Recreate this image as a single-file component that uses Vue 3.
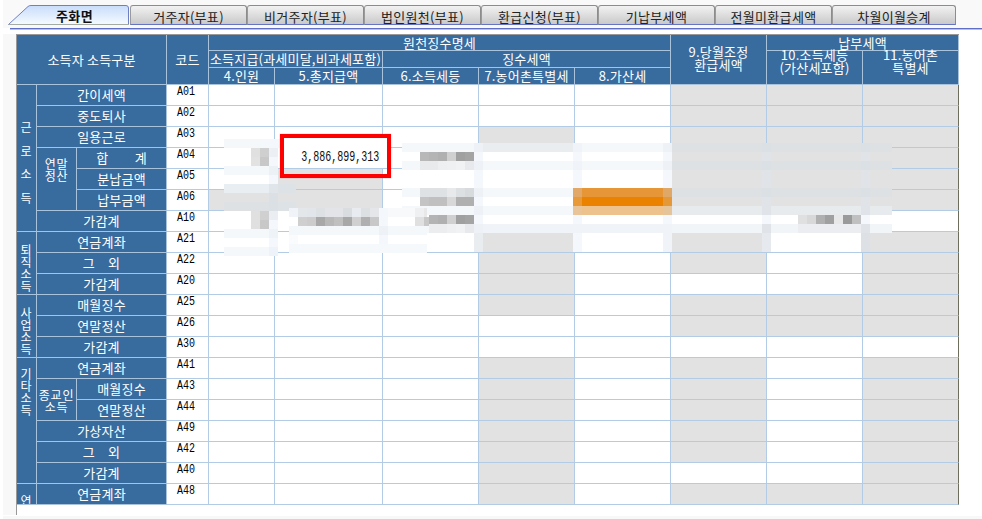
<script setup>
const tabs = ['주화면', '거주자(부표)', '비거주자(부표)', '법인원천(부표)', '환급신청(부표)', '기납부세액', '전월미환급세액', '차월이월승계']

const headers = [
  { t: ['소득자 소득구분'], c: '1 / 4', r: '1 / 4', cls: 'mid' },
  { t: ['코드'], c: '4 / 5', r: '1 / 4', cls: 'mid' },
  { t: ['원천징수명세'], c: '5 / 10', r: '1 / 2', cls: 'mid' },
  { t: ['9.당월조정', '환급세액'], c: '10 / 11', r: '1 / 4', cls: 'mid pair' },
  { t: ['납부세액'], c: '11 / 13', r: '1 / 2', cls: 'mid' },
  { t: ['소득지급(과세미달,비과세포함)'], c: '5 / 7', r: '2 / 3', cls: 'mid' },
  { t: ['징수세액'], c: '7 / 10', r: '2 / 3', cls: 'mid' },
  { t: ['10.소득세등', '(가산세포함)'], c: '11 / 12', r: '2 / 4', cls: 'top' },
  { t: ['11.농어촌', '특별세'], c: '12 / 13', r: '2 / 4', cls: 'top' },
  { t: ['4.인원'], c: '5 / 6', r: '3 / 4', cls: 'mid' },
  { t: ['5.총지급액'], c: '6 / 7', r: '3 / 4', cls: 'mid' },
  { t: ['6.소득세등'], c: '7 / 8', r: '3 / 4', cls: 'mid' },
  { t: ['7.농어촌특별세'], c: '8 / 9', r: '3 / 4', cls: 'mid' },
  { t: ['8.가산세'], c: '9 / 10', r: '3 / 4', cls: 'mid' },
]

const groups = [
  { t: '근로소득', start: 0, span: 7, pad: 30, lh: 23.5 },
  { t: '퇴직소득', start: 7, span: 3, pad: 12, lh: 12 },
  { t: '사업소득', start: 10, span: 3, pad: 12, lh: 12 },
  { t: '기타소득', start: 13, span: 6, pad: 10, lh: 12 },
  { t: '연', start: 19, span: 1, pad: 11, lh: 12 },
]

const subs = [
  { t: ['연말', '정산'], start: 3, span: 3, pad: 10 },
  { t: ['종교인', '소득'], start: 14, span: 2, pad: 10 },
]

const labels = [
  ['간이세액', 0, 2], ['중도퇴사', 1, 2], ['일용근로', 2, 2],
  ['합\u3000\u3000계', 3, 3], ['분납금액', 4, 3], ['납부금액', 5, 3],
  ['가감계', 6, 2], ['연금계좌', 7, 2], ['그\u3000외', 8, 2], ['가감계', 9, 2],
  ['매월징수', 10, 2], ['연말정산', 11, 2], ['가감계', 12, 2],
  ['연금계좌', 13, 2], ['매월징수', 14, 3], ['연말정산', 15, 3],
  ['가상자산', 16, 2], ['그\u3000외', 17, 2], ['가감계', 18, 2], ['연금계좌', 19, 2],
]

const rows = [
  ['A01', [9, 10, 11]], ['A02', [9, 10, 11]], ['A03', [7, 9, 10, 11]], ['A04', [9, 10, 11]],
  ['A05', [5, 9, 10, 11]], ['A06', [4, 5, 9, 10, 11]], ['A10', []], ['A21', [7, 9, 11]],
  ['A22', [7, 9, 11]], ['A20', [7, 11]], ['A25', [7, 9, 10, 11]], ['A26', [9, 10, 11]],
  ['A30', []], ['A41', [7, 9, 11]], ['A43', [7, 9, 11]], ['A44', [7, 9, 11]],
  ['A49', [7, 9, 11]], ['A42', [7, 9, 11]], ['A40', [7, 11]], ['A48', [7, 9, 10, 11]],
]
const dataCols = [4, 5, 6, 7, 8, 9, 10, 11]

const strip = 'f4f8fb'
const band = 'f4f7fb'
const cool = 'dde1e4'
// [x, y, w, h, colour] in page coordinates: the pixelated redaction laid over the table
const mosaic = [
  // over the 인원 column
  [224, 139, 45, 9, strip], [224, 166, 45, 9, strip], [224, 184, 45, 9, 'e9eef2'], [224, 202, 45, 9, cool],
  [224, 229, 45, 9, strip], [224, 247, 45, 9, strip],
  [269, 139, 9, 117, band], [269, 148, 9, 9, 'ecf0f4'], [269, 166, 9, 9, 'ecf1f5'], [269, 184, 9, 9, 'e0e5ea'],
  [269, 193, 9, 18, 'dbe0e4'], [269, 211, 9, 9, 'eaeef2'], [269, 229, 9, 9, 'eef3f7'], [269, 247, 9, 9, 'eef3fa'],
  [278, 139, 18, 9, strip], [278, 184, 18, 9, 'dde2e6'], [278, 202, 18, 9, 'dde2e6'],
  [251, 148, 9, 9, 'e0e0e0'], [260, 148, 9, 9, 'cfcfcf'], [251, 157, 9, 9, 'e2e2e2'], [260, 157, 9, 9, 'c8c8c8'],
  [251, 211, 9, 9, 'e0e0e0'], [260, 211, 9, 9, 'd0d0d0'], [251, 220, 9, 9, 'e0e0e0'], [260, 220, 9, 9, 'c8c8c8'],
  // inside the highlighted cell
  [283, 138, 104, 30, 'ffffff'],
  // long strips across the right half
  [402, 143, 72, 9, strip], [402, 161, 72, 9, strip], [402, 188, 72, 9, strip], [402, 206, 72, 9, strip],
  [427, 224, 47, 9, strip],
  [474, 143, 9, 109, band], [474, 143, 9, 9, 'eef1f5'], [474, 161, 9, 9, 'eef2f6'], [474, 188, 9, 9, 'eef2f6'],
  [474, 206, 9, 9, 'eef2f6'], [474, 224, 9, 9, 'eef2f6'], [474, 233, 9, 19, 'e9edf0'],
  [483, 143, 90, 9, 'e9edf0'], [483, 161, 90, 9, strip], [483, 188, 90, 9, strip], [483, 206, 90, 9, strip], [483, 224, 90, 9, 'f0f4f8'],
  [573, 143, 9, 109, band], [573, 143, 9, 9, 'f0f4f8'], [573, 161, 9, 9, 'f0f4f8'], [573, 224, 9, 9, 'f0f4f8'],
  [582, 143, 81, 9, strip], [582, 161, 81, 9, strip], [582, 224, 81, 9, 'f0f4f8'],
  [663, 143, 9, 109, band], [663, 143, 9, 9, 'eef2f6'], [663, 161, 9, 9, 'eef2f6'], [663, 224, 9, 28, 'f0f4f8'],
  // orange block
  [573, 188, 9, 9, 'e2a868'], [582, 188, 81, 9, 'e69636'], [663, 188, 9, 9, 'e0a868'],
  [573, 197, 9, 9, 'e89a38'], [582, 197, 81, 9, 'ea8200'], [663, 197, 9, 9, 'e49838'],
  [573, 206, 9, 9, 'e8c498'], [582, 206, 81, 9, 'eec28c'], [663, 206, 9, 9, 'e4c498'],
  // gray columns
  [672, 143, 220, 9, cool], [672, 161, 220, 9, cool], [672, 188, 220, 9, cool], [672, 206, 220, 9, 'e8ebee'],
  [672, 224, 220, 9, 'f2f5f8'],
  [762, 143, 9, 109, 'e0e4e8'], [762, 143, 9, 9, 'dbe0e5'], [762, 161, 9, 9, 'dbe0e5'], [762, 188, 9, 9, 'dbe0e5'],
  [762, 215, 9, 9, band], [762, 233, 9, 19, 'e6e9ed'],
  [861, 143, 9, 109, 'e0e4e8'], [861, 143, 9, 9, 'dbe0e5'], [861, 161, 9, 9, 'dbe0e5'], [861, 188, 9, 9, 'dbe0e5'],
  [861, 215, 9, 9, band], [861, 233, 9, 19, 'dde1e5'],
  [798, 215, 9, 9, 'e0e0e0'], [807, 215, 9, 9, 'd8d8d8'], [816, 215, 9, 9, 'b0b0b0'], [825, 215, 9, 9, 'a0a0a0'],
  [834, 215, 9, 9, 'e8e8e8'], [843, 215, 9, 9, '9a9a9a'], [852, 215, 9, 9, 'c0c0c0'], [798, 224, 63, 9, 'ecedf0'],
  // 소득세등 figures
  ...[['b8b8b8', 'e9eaec'], ['b4b4b4', 'e9eaec'], ['b0b0b0', 'eeeff1'], ['d0d0d0', 'eef0f2'], ['a0a0a0', 'f0f2f4'], ['a4a4a4', 'e8e9ec']]
    .flatMap(([a, b], i) => [[420 + i * 9, 152, 9, 9, a], [420 + i * 9, 161, 9, 9, b]]),
  ...[['dfe2e5', 'c4c4c4'], ['dfe2e5', 'c0c0c0'], ['dfe2e5', 'c0c0c0'], ['e8e9eb', 'd8d8d8'], ['dde0e3', 'b0b0b0'], ['d8dbde', 'b0b0b0']]
    .flatMap(([a, b], i) => [[420 + i * 9, 188, 9, 9, a], [420 + i * 9, 197, 9, 9, b]]),
  ...[['b4b4b4', 'ecedef'], ['b0b0b0', 'ecedef'], ['d0d0d0', 'eef0f2'], ['a0a0a0', 'f0f2f4'], ['a4a4a4', 'e8e9ec']]
    .flatMap(([a, b], i) => [[429 + i * 9, 215, 9, 9, a], [429 + i * 9, 224, 9, 9, b]]),
  // 총지급액 row
  [289, 208, 138, 9, 'f8f9fb'], [289, 208, 9, 9, 'f0f3f7'], [379, 208, 9, 45, band],
  [289, 217, 9, 9, 'ffffff'], [388, 217, 27, 9, 'ffffff'], [415, 217, 9, 9, 'e0e0e0'], [424, 217, 5, 9, 'c8c8c8'],
  [289, 226, 138, 9, strip], [289, 235, 9, 9, 'fafbfd'], [298, 235, 81, 9, 'ffffff'], [388, 235, 39, 9, 'ffffff'], [289, 244, 138, 9, 'f6f9fc'],
  [379, 226, 9, 9, 'eef2f6'],
  [415, 208, 9, 9, 'eff0f2'], [424, 208, 3, 9, 'e8e8e8'],
  ...['e4e7ea', 'e2e6ea', 'dde1e4', 'e2e4e8', 'e2e4e8', 'dadde0', 'e8ebef', 'dde0e3', 'e4e6ea'].map((c, i) => [298 + i * 9, 208, 9, 9, c]),
  ...['cfcfcf', 'cccccc', 'a8a8a8', 'b8b8b8', 'c0c0c0', 'a8a8a8', 'd0d0d0', 'b0b0b0', 'c8c8c8'].map((c, i) => [298 + i * 9, 217, 9, 9, c]),
].map(([x, y, w, h, c]) => ({ left: `${x - 17}px`, top: `${y - 35}px`, width: `${w}px`, height: `${h}px`, background: `#${c}` }))
</script>

<template>
  <div class="page">
    <div class="tabs">
      <div v-for="(tab, i) in tabs" :key="tab" class="tab" :class="{ active: i === 0, last: i === tabs.length - 1 }">
        <svg v-if="i === 0" class="tab-shape" width="122" height="20" viewBox="0 0 122 20">
          <defs>
            <linearGradient id="activeFill" x1="0" y1="0" x2="0" y2="1">
              <stop offset="0" stop-color="#c8ddfa" />
              <stop offset="1" stop-color="#f6faff" />
            </linearGradient>
          </defs>
          <path d="M0.5 19.5 L20 1.5 Q21 0.5 23 0.5 H118 Q120.5 0.5 120.5 3 V19.5 Z" fill="url(#activeFill)" stroke="#6f7fc4" />
          <path d="M0.5 19.5 H121" stroke="#a4aaa4" fill="none" />
        </svg>
        <span class="tab-label">{{ tab }}</span>
      </div>
    </div>
    <div class="rule"></div>
    <div class="sheet">
      <div class="frame">
        <div class="table">
          <div
            v-for="h in headers"
            :key="h.t[0]"
            class="cell head"
            :class="h.cls"
            :style="{ gridColumn: h.c, gridRow: h.r }"
          >
            <span v-for="line in h.t" :key="line">{{ line }}</span>
          </div>

          <div
            v-for="g in groups"
            :key="g.t"
            class="cell head group"
            :style="{ gridColumn: '1 / 2', gridRow: `${g.start + 4} / span ${g.span}`, paddingTop: g.pad + 'px', lineHeight: g.lh + 'px' }"
          >
            <span v-for="ch in g.t" :key="ch">{{ ch }}</span>
          </div>

          <div
            v-for="s in subs"
            :key="s.t[0]"
            class="cell head group"
            :style="{ gridColumn: '2 / 3', gridRow: `${s.start + 4} / span ${s.span}`, paddingTop: s.pad + 'px' }"
          >
            <span v-for="line in s.t" :key="line">{{ line }}</span>
          </div>

          <div
            v-for="l in labels"
            :key="l[1]"
            class="cell head mid"
            :style="{ gridColumn: `${l[2]} / 4`, gridRow: l[1] + 4 }"
          >
            <span>{{ l[0] }}</span>
          </div>

          <template v-for="(row, i) in rows" :key="row[0]">
            <div class="cell code" :style="{ gridColumn: 4, gridRow: i + 4 }"><span class="narrow">{{ row[0] }}</span></div>
            <div
              v-for="n in dataCols"
              :key="n"
              class="cell data"
              :class="{ gray: row[1].includes(n), edge: n === 11 }"
              :style="{ gridColumn: n + 1, gridRow: i + 4 }"
            ></div>
          </template>

          <i v-for="(m, i) in mosaic" :key="i" class="pix" :style="m"></i>
          <div class="highlight"><span class="figure">3,886,899,313</span></div>
        </div>
      </div>
    </div>
    <div class="foot"></div>
  </div>
</template>

<style>
html, body {
  margin: 0;
  background: #fff;
}
</style>

<style scoped>
.page {
  width: 982px;
  height: 519px;
  overflow: hidden;
  position: relative;
  font-family: "Noto Sans CJK KR", "Noto Sans", sans-serif;
  font-size: 13px;
  background: #fff;
}

.tabs {
  display: flex;
  height: 28px;
  box-sizing: border-box;
  margin-left: 3px;
  padding: 5px 0 0 5px;
  background: #f9f9f9;
}

.tab {
  position: relative;
  width: 117px;
  height: 20px;
  box-sizing: border-box;
  border: 1px solid #8c8c8c;
  border-bottom-color: #6674c4;
  border-left-color: #9a9a9a;
  border-radius: 3px 3px 0 0;
  background: linear-gradient(#f2f2f2, #c9c9c9);
  color: #222;
  text-align: center;
  line-height: 21px;
  white-space: nowrap;
}

.tab.active {
  width: 122px;
  border: 0;
  background: none;
  font-weight: 700;
  color: #111;
}

.tab.active .tab-label {
  padding-left: 11px;
  line-height: 22px;
}

.tab.last {
  width: 124px;
}

.tab-shape {
  position: absolute;
  left: 0;
  top: 0;
}

.tab-label {
  position: relative;
  display: block;
  letter-spacing: 0.3px;
}

.rule {
  height: 1px;
  margin-left: 10px;
  background: #5f6fc6;
  box-shadow: 0 1px 0 #b8c0e6;
}

.sheet {
  margin: 5px 0 0 3px;
  padding-left: 13px;
  background: linear-gradient(#f8f8f8, #f8f8f8) left / 13px 100% no-repeat;
}

.frame {
  width: 943px;
  height: 481px;
  box-sizing: border-box;
  border-top: 1px solid #999;
  border-left: 1px solid #999;
}

.table {
  position: relative;
  display: grid;
  grid-template-columns: 20px 40px 90px 42px 66px 108px repeat(6, 96px);
  grid-template-rows: 16px 17px 17px repeat(20, 21px);
  width: 942px;
  height: 470px;
  background: #fff;
}

.cell {
  box-sizing: border-box;
  border-right: 1px solid #b3cce6;
  border-bottom: 1px solid #b3cce6;
  min-width: 0;
}

.head {
  display: flex;
  flex-direction: column;
  align-items: center;
  background: #386b9e;
  border-color: #a9c3dd;
  color: #fff;
  line-height: 12px;
  letter-spacing: 0.2px;
  white-space: nowrap;
}

.mid {
  justify-content: center;
}

.pair {
  line-height: 13px;
  padding-bottom: 3px;
}

.top {
  justify-content: flex-start;
  line-height: 13px;
}

.top span:first-child {
  margin-top: -3px;
}

.group {
  justify-content: flex-start;
  font-size: 12px;
  letter-spacing: 0.8px;
  overflow: hidden;
}

.code {
  background: #fff;
  color: #000;
  font-family: "Liberation Mono", monospace;
  font-size: 13px;
  line-height: 12px;
  padding: 1px 3px 0 0;
  text-align: center;
}

.narrow {
  display: block;
  transform: scaleX(0.77);
}

.data {
  background: #fff;
}

.data.gray {
  background: #e2e2e2;
}

.data.edge {
  border-right-color: #6e6e5e;
}

.pix {
  position: absolute;
  display: block;
}

.highlight {
  position: absolute;
  left: 263px;
  top: 99px;
  width: 111px;
  height: 44px;
  box-sizing: border-box;
  display: flex;
  justify-content: flex-end;
  align-items: flex-start;
  border: 4px solid #f00;
  box-shadow: 0 0 1px rgba(255, 0, 0, 0.5);
  padding: 12px 8px 0 0;
  color: #111;
  font-family: "Liberation Mono", monospace;
  font-size: 14px;
  line-height: 14px;
}

.figure {
  flex: none;
  display: block;
  transform: scaleX(0.714);
  transform-origin: right center;
}

.foot {
  position: absolute;
  left: 3px;
  right: 0;
  bottom: 0;
  height: 3px;
  background: #f8f8f8;
}
</style>
